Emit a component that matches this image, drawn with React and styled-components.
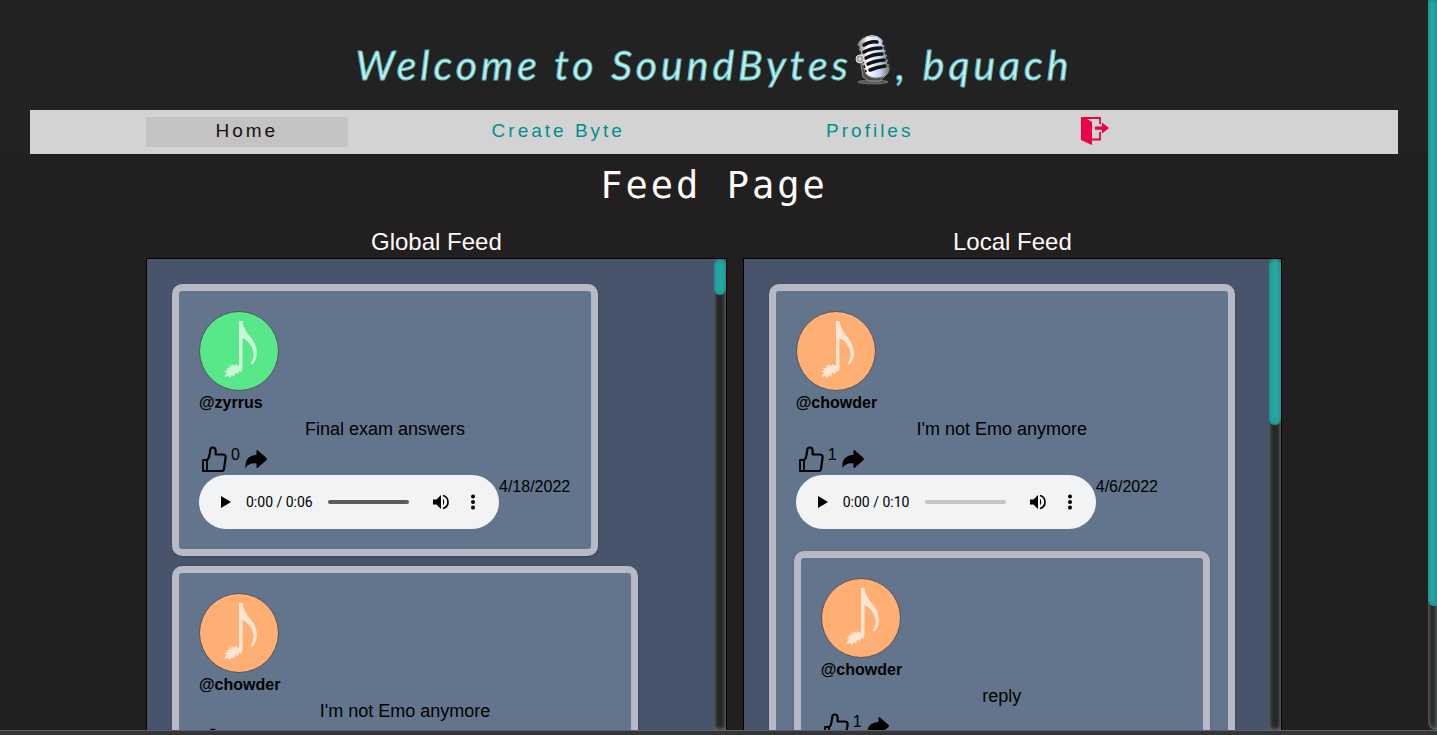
import React from "react";
import styled, { createGlobalStyle } from "styled-components";

const sans = '"Liberation Sans", Arial, sans-serif';

const GlobalStyle = createGlobalStyle`
  * { box-sizing: border-box; }
  body { margin: 0; background: #221f20; font-family: ${sans}; }
`;

const Screen = styled.div`
  display: flex;
  flex-direction: column;
  height: 100vh;
  overflow: hidden;
`;

const Viewport = styled.div`
  flex: 1;
  min-height: 0;
  display: flex;
`;

const Page = styled.div`
  flex: 1;
  min-width: 0;
  display: flex;
  flex-direction: column;
`;

const BottomEdge = styled.div`
  height: 5px;
  background: #343539;
  border-top: 1px solid #616164;
`;

const ScrollTrack = styled.div`
  flex: none;
  width: ${(p) => (p.$page ? "9px" : "12px")};
  background: #262626;
  border-radius: ${(p) => (p.$page ? "0 0 0 8px" : "0")};
  box-shadow: inset 0 0 5px #78918c;
`;

const ScrollThumb = styled.div`
  height: ${(p) => p.$size};
  background: #27a6a4;
  border-radius: ${(p) => (p.$page ? "0 0 0 6px" : "6px")};
  box-shadow: inset 0 0 4px #1b7c7b;
`;

const Header = styled.header`
  background: #222;
  padding: 0 30px;
`;

const Title = styled.h1`
  margin: 0;
  height: 110px;
  padding-top: 20px;
  display: flex;
  align-items: center;
  justify-content: center;
  white-space: pre;
  font: italic 400 41px/50px Lato, sans-serif;
  letter-spacing: 4px;
  color: #c5eeee;
  -webkit-text-stroke: 1px #56b9b9;
  svg { margin: 0 2px 10px 0; }
`;

const Nav = styled.nav`
  height: 44px;
  padding: 0 61px;
  background: lightgray;
  display: grid;
  grid-template-columns: repeat(4, 1fr);
  align-items: center;
  justify-items: center;
`;

const NavLink = styled.a`
  width: 65%;
  height: 30px;
  text-align: center;
  font-size: 19px;
  line-height: 28px;
  letter-spacing: 3px;
  text-decoration: none;
  color: ${(p) => (p.$active ? "#111" : "#008f8c")};
  background: ${(p) => (p.$active ? "#c5c2c3" : "transparent")};
`;

const IconButton = styled.button`
  display: block;
  padding: 0;
  border: 0;
  background: none;
  color: inherit;
  svg { display: block; }
`;

const LogoutButton = styled(IconButton)`
  justify-self: start;
  margin-left: 53px;
  color: #ee0044;
`;

const PageTitle = styled.h2`
  margin: 0;
  padding-top: 10px;
  text-align: center;
  font: 400 37px/44px "DejaVu Sans Mono", monospace;
  letter-spacing: 3px;
  color: snow;
`;

const Feeds = styled.main`
  flex: 1;
  min-height: 0;
  margin: 18px 146px 0;
  display: grid;
  grid-template-columns: 14fr 13fr;
  grid-template-rows: minmax(0, 1fr);
  column-gap: 16px;
`;

const Feed = styled.section`
  min-width: 0;
  display: flex;
  flex-direction: column;
`;

const FeedTitle = styled.h3`
  margin: 0;
  text-align: center;
  font-size: 24px;
  font-weight: 400;
  line-height: 32px;
  color: snow;
`;

const FeedPanel = styled.div`
  flex: 1;
  min-height: 0;
  display: flex;
  border: 1px solid #000;
  border-bottom: 0;
  background: #222;
`;

const FeedList = styled.div`
  flex: 1;
  min-width: 0;
  overflow: hidden;
  padding: 25px;
  background: #47546b;
  display: flex;
  flex-direction: column;
  align-items: flex-start;
  gap: 10px;
`;

const Card = styled.article`
  flex: none;
  width: ${(p) => p.$width};
  padding: 20px;
  border: 7px solid #b8b9c6;
  border-radius: 10px;
  background: #63758d;
  color: #000;
  box-shadow: 0 1px 3px rgba(0, 0, 0, 0.2);
`;

const Replies = styled.div`
  margin: 22px -2px 0;
`;

const Avatar = styled.div`
  width: 80px;
  height: 80px;
  border: 1px solid #55555a;
  border-radius: 50%;
  background: ${(p) => p.$color};
  svg { display: block; }
`;

const UserLink = styled.a`
  display: block;
  font-size: 16px;
  font-weight: 700;
  line-height: 24px;
  color: #000;
  text-decoration: none;
`;

const ByteTitle = styled.div`
  height: 30px;
  text-align: center;
  font-size: 18px;
  line-height: 28px;
`;

const Actions = styled.div`
  display: flex;
  height: 30px;
  padding-left: 1px;
`;

const Count = styled.span`
  width: 16px;
  padding-left: 3px;
  font-size: 16px;
  line-height: 20px;
`;

const AudioRow = styled.div`
  display: flex;
  align-items: flex-start;
`;

const Player = styled.div`
  flex: none;
  width: 300px;
  height: 54px;
  padding: 0 16px;
  display: flex;
  align-items: center;
  border-radius: 27px;
  background: #f1f3f4;
`;

const PlayerTime = styled.span`
  width: 91px;
  padding-left: 9px;
  font: 14px/20px Roboto, sans-serif;
  white-space: nowrap;
`;

const Seek = styled.input`
  appearance: none;
  width: 81px;
  height: 4px;
  margin: 0 22px 0 0;
  border-radius: 2px;
  background: ${(p) => (p.$loaded ? "#5c5c5c" : "#c3c4c6")};
  &::-webkit-slider-thumb { appearance: none; width: 0; height: 0; }
`;

const MoreButton = styled(IconButton)`
  margin-left: 12px;
`;

const ByteDate = styled.time`
  font-size: 16px;
  line-height: 24px;
`;

const MicIcon = () => (
  <svg width="42" height="52" viewBox="0 0 42 52" role="img" aria-label="microphone">
    <defs>
      <linearGradient id="mic" x1="0" x2="1">
        <stop offset="0" stopColor="#777" />
        <stop offset=".3" stopColor="#fff" />
        <stop offset=".7" stopColor="#c4d8fa" />
        <stop offset="1" stopColor="#777" />
      </linearGradient>
    </defs>
    <ellipse cx="21" cy="48" rx="15" ry="2" fill="#555b5d" stroke="#858585" strokeWidth=".6" />
    <path d="M8 24 11 43 17 47 28 47 33 42 25 43 16 40 11 25Z" fill="#4d4d4d" stroke="#bbb" strokeWidth=".7" />
    <path d="M6 10Q10 2 20 2Q29 2 31 8L37 32Q38 41 30 43Q20 46 14 40L11 32Z" fill="url(#mic)" stroke="#888" strokeWidth="1" />
    <g stroke="#101213" strokeWidth="3.6" strokeLinecap="round" fill="none">
      <path d="M12 11Q18 7 25 8M12 18Q19 14 29 14M14 24Q21 20 30 20M16 30Q22 27 32 26M18 36Q25 33 33 32" />
    </g>
    <path d="M6 12 14 38M31 8 37 33" stroke="#222" strokeWidth="1.8" strokeDasharray="3 2" />
    <circle cx="8" cy="25" r="4" fill="#9ba0a2" stroke="#e6e6e6" />
    <circle cx="8" cy="25" r="1.5" fill="#ddd" />
    <path d="M14 3Q20 0 26 3" stroke="#d8d8d8" fill="none" />
  </svg>
);

const LogoutIcon = () => (
  <svg width="32" height="32" viewBox="0 0 32 32" fill="currentColor">
    <path d="M2 1H5L13 6V29L2 24Z" />
    <path d="M4 2H21V8M21 16V23.5H13" fill="none" stroke="currentColor" strokeWidth="1.8" />
    <path d="M16 10.5H23V6.5L30 12L23 17.5V13.7H16Z" />
  </svg>
);

const NoteIcon = () => (
  <svg width="78" height="78" viewBox="0 0 78 78" fill="#fff" fillOpacity=".68">
    <path d="M39 9H42.500Q43 15 48 22Q57 32 57 41Q57 47 53 52Q51 53 51 51Q55 44 53 39Q51 30 42.500 26V54Q43 57 41 60L39 59L38 62L35 61L34 65L32 63L30 66L28 64Q24 66 25 63L27 61L24 59L28 58L26 56L30 56L28 53L32 55L31 52L35 54L35 52L39 54Z" />
  </svg>
);

const LikeIcon = () => (
  <svg width="28" height="28" viewBox="0 0 28 28" fill="none" stroke="currentColor" strokeWidth="2.2" strokeLinejoin="round" strokeLinecap="round">
    <path d="M3 14H7V25H3Z" strokeWidth="1.8" />
    <path d="M7 14.5Q9.500 12 9.500 9L10.300 4Q10.500 1.500 12.500 1.500Q15.600 1.500 15.600 4.500V8.500H22.500Q26 8.500 25.600 11.500L24 23Q23.600 25 21.500 25H7" />
  </svg>
);

const ShareIcon = () => (
  <svg width="24" height="28" viewBox="0 0 24 28" fill="currentColor">
    <path d="M12.500 4.500Q13 3.500 14 4.500L22.500 12Q23.500 13 22.500 14L14 21.500Q13 22.500 12.500 21.500V17.500Q5 16.500 1.500 22Q0 10 12.500 8.700Z" />
  </svg>
);

const PlayIcon = () => (
  <svg width="22" height="20" viewBox="0 0 22 20">
    <path d="M6 4 16 10 6 16Z" />
  </svg>
);

const VolumeIcon = () => (
  <svg width="20" height="20" viewBox="0 0 20 20">
    <path d="M2 7.500H5.500L10 3V17L5.500 12.500H2Z" />
    <path d="M12 6.500Q14.500 10 12 13.500Z" />
    <path d="M12 3.500Q17 5 17 10Q17 15 12 16.500" fill="none" stroke="#000" strokeWidth="1.700" />
  </svg>
);

const MoreIcon = () => (
  <svg width="20" height="20" viewBox="0 0 20 20">
    <circle cx="10" cy="4.500" r="2" />
    <circle cx="10" cy="10" r="2" />
    <circle cx="10" cy="15.500" r="2" />
  </svg>
);

function AudioPlayer({ duration, loaded }) {
  return (
    <Player>
      <IconButton type="button" aria-label="Play"><PlayIcon /></IconButton>
      <PlayerTime>0:00 / {duration}</PlayerTime>
      <Seek type="range" min="0" max="100" defaultValue="0" aria-label="Seek" $loaded={loaded} />
      <IconButton type="button" aria-label="Mute"><VolumeIcon /></IconButton>
      <MoreButton type="button" aria-label="More options"><MoreIcon /></MoreButton>
    </Player>
  );
}

const green = "#58e889";
const orange = "#ffae74";

function Byte({ user, color, title, likes, duration, date, loaded, width = "auto", children }) {
  return (
    <Card $width={width}>
      <Avatar $color={color}><NoteIcon /></Avatar>
      <UserLink href="#profile">@{user}</UserLink>
      <ByteTitle>{title}</ByteTitle>
      <Actions>
        <IconButton type="button" aria-label="Like"><LikeIcon /></IconButton>
        <Count>{likes}</Count>
        <IconButton type="button" aria-label="Reply"><ShareIcon /></IconButton>
      </Actions>
      <AudioRow>
        <AudioPlayer duration={duration} loaded={loaded} />
        <ByteDate>{date}</ByteDate>
      </AudioRow>
      {children && <Replies>{children}</Replies>}
    </Card>
  );
}

function EmoThread() {
  return (
    <Byte user="chowder" color={orange} title="I'm not Emo anymore" likes={1} duration="0:10" date="4/6/2022" width="466px">
      <Byte user="chowder" color={orange} title="reply" likes={1} duration="0:10" date="4/6/2022" />
    </Byte>
  );
}

function FeedColumn({ title, thumb, children }) {
  return (
    <Feed>
      <FeedTitle>{title}</FeedTitle>
      <FeedPanel>
        <FeedList>{children}</FeedList>
        <ScrollTrack><ScrollThumb $size={thumb} /></ScrollTrack>
      </FeedPanel>
    </Feed>
  );
}

export default function App() {
  return (
    <Screen>
      <GlobalStyle />
      <Viewport>
        <Page>
          <Header>
            <Title><span>Welcome to SoundBytes</span><MicIcon /><span>, bquach</span></Title>
            <Nav>
              <NavLink href="#home" $active>Home</NavLink>
              <NavLink href="#create">Create Byte</NavLink>
              <NavLink href="#profiles">Profiles</NavLink>
              <LogoutButton type="button" aria-label="Log out"><LogoutIcon /></LogoutButton>
            </Nav>
          </Header>
          <PageTitle>Feed Page</PageTitle>
          <Feeds>
            <FeedColumn title="Global Feed" thumb="36px">
              <Byte user="zyrrus" color={green} title="Final exam answers" likes={0} duration="0:06" date="4/18/2022" width="426px" loaded />
              <EmoThread />
            </FeedColumn>
            <FeedColumn title="Local Feed" thumb="166px">
              <EmoThread />
            </FeedColumn>
          </Feeds>
        </Page>
        <ScrollTrack $page><ScrollThumb $page $size="83%" /></ScrollTrack>
      </Viewport>
      <BottomEdge />
    </Screen>
  );
}
